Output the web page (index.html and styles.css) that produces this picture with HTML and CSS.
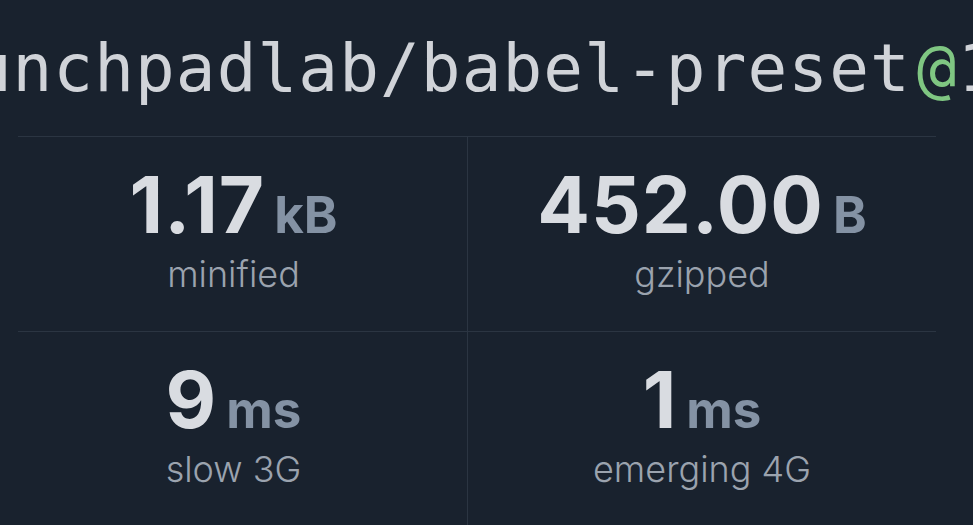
FILE: index.html
```html
<!DOCTYPE html>
<html lang="en">
<head>
<meta charset="utf-8">
<title>@launchpadlab/babel-preset</title>
<link rel="stylesheet" href="styles.css">
</head>
<body>
<header class="title-bar">
  <h1 class="package-name">@launchpadlab/babel-preset<span class="at">@</span><span class="version">1.0.0</span></h1>
</header>
<section class="stats">
  <div class="stat-row">
    <div class="stat">
      <div class="stat-value">1.17<span class="unit">kB</span></div>
      <div class="stat-label">minified</div>
    </div>
    <div class="stat">
      <div class="stat-value">452.00<span class="unit">B</span></div>
      <div class="stat-label">gzipped</div>
    </div>
  </div>
  <div class="stat-row">
    <div class="stat">
      <div class="stat-value">9<span class="unit">ms</span></div>
      <div class="stat-label">slow 3G</div>
    </div>
    <div class="stat">
      <div class="stat-value">1<span class="unit">ms</span></div>
      <div class="stat-label">emerging 4G</div>
    </div>
  </div>
</section>
</body>
</html>
```

FILE: styles.css
```css
html, body {
  margin: 0;
  padding: 0;
  background: #19222e;
  overflow: hidden;
}

body {
  width: 973px;
  height: 525px;
  font-family: Inter, "Liberation Sans", sans-serif;
}

.title-bar {
  height: 136px;
  display: flex;
  justify-content: center;
  padding-top: 29px;
  padding-left: 38px;
  box-sizing: border-box;
}

.package-name {
  margin: 0;
  font-family: "DejaVu Sans Mono", "Liberation Mono", monospace;
  font-weight: normal;
  font-size: 66px;
  line-height: 80px;
  letter-spacing: 1.1px;
  color: #d0d3d8;
  white-space: nowrap;
  flex-shrink: 0;
}

.at {
  color: #7fc682;
  margin-left: 6px;
}

.stats {
  width: 918px;
  margin-left: 18px;
}

.stat-row {
  display: grid;
  grid-template-columns: 450px 468px;
  border-top: 1px solid #2b3542;
  height: 195px;
  box-sizing: border-box;
}

.stat {
  display: flex;
  flex-direction: column;
  align-items: center;
  padding-top: 29px;
}

.stat:first-child {
  padding-right: 18px;
  border-right: 1px solid #2b3542;
}

.stat-value {
  font-size: 78px;
  font-weight: 700;
  line-height: 78px;
  letter-spacing: 1px;
  color: #d9dce1;
  white-space: nowrap;
}

.unit {
  font-size: 51px;
  line-height: 51px;
  letter-spacing: 0;
  color: #8492a4;
  margin-left: 9px;
}

.stat-label {
  margin-top: 9px;
  font-size: 36px;
  font-weight: 300;
  line-height: 42px;
  color: #9ba3ae;
}
```
